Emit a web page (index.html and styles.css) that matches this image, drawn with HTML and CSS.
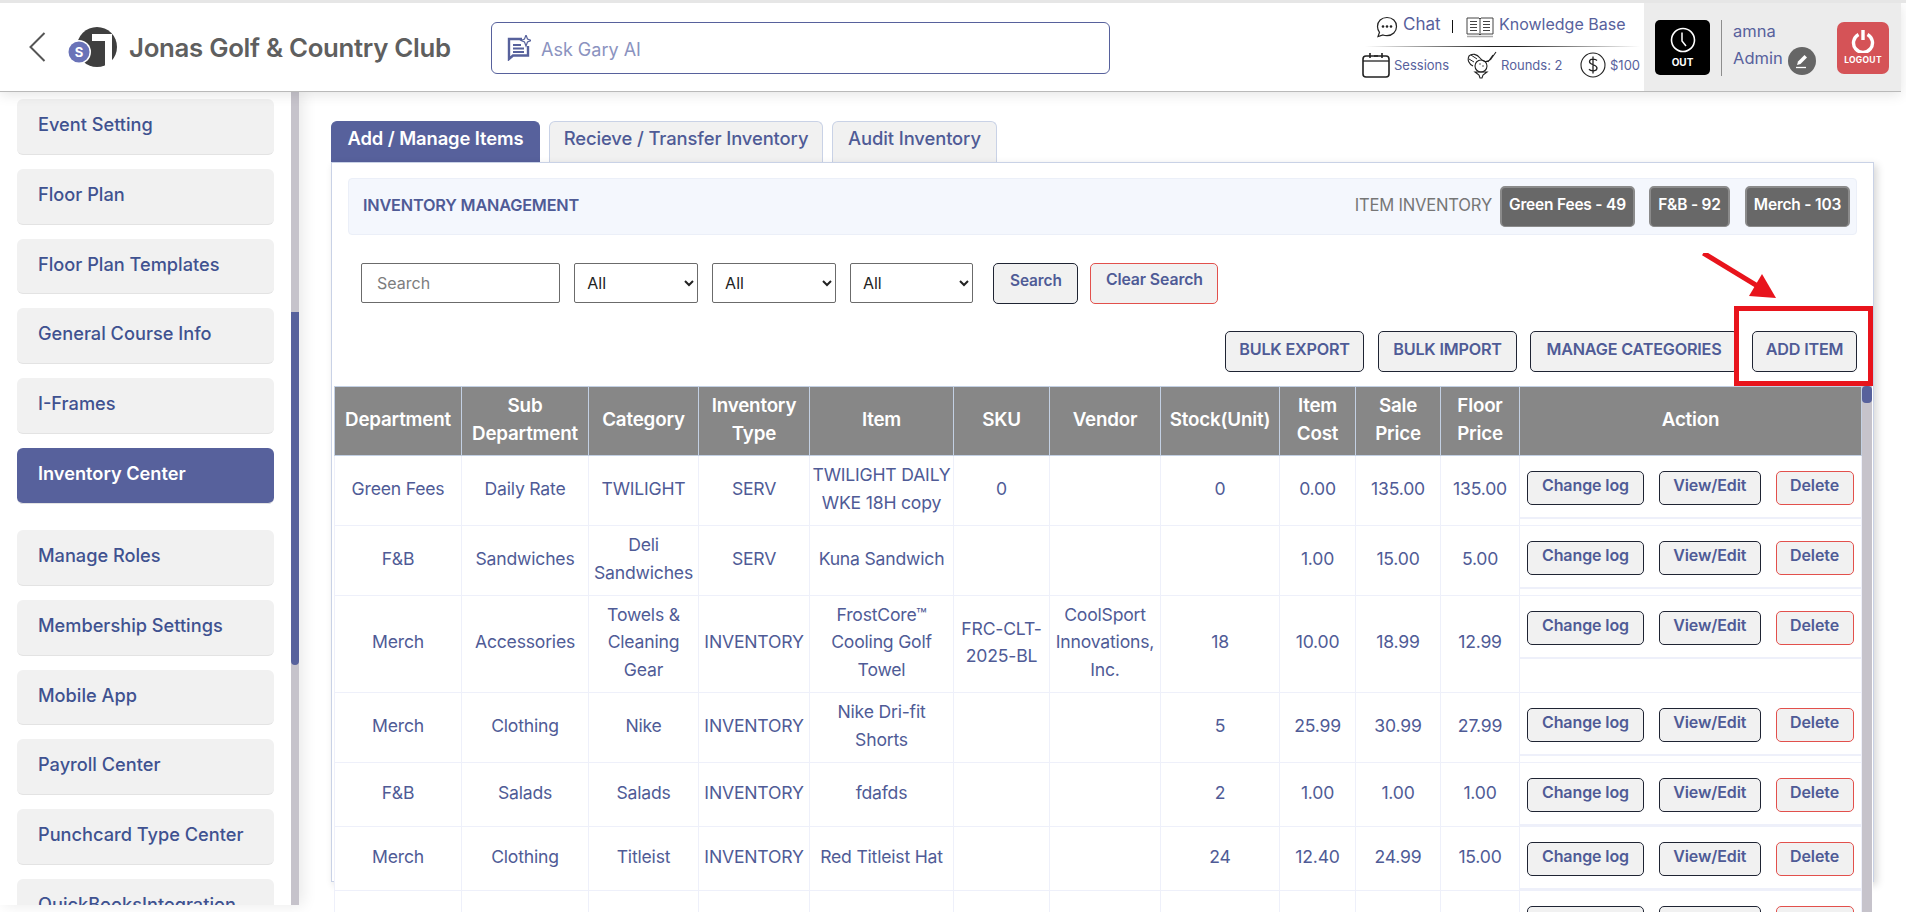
FILE: index.html
```html
<!DOCTYPE html>
<html lang="en">
<head>
<meta charset="utf-8">
<title>Inventory Center</title>
<link rel="stylesheet" href="styles.css">
</head>
<body>
<div class="page">
  <header class="topbar">
    <div class="brand">
      <svg class="back" viewBox="0 0 17 30" width="17" height="30"><path d="M15.5 1 L1.5 15 L15.5 29" fill="none" stroke="#555" stroke-width="2"/></svg>
      <svg class="logo" viewBox="0 0 52 42" width="52" height="42">
        <circle cx="31" cy="21" r="20" fill="#3f3f3f"/>
        <path d="M26 8 H46 V38 L39 40 V15 H26 Z" fill="#fff"/>
        <circle cx="13" cy="26" r="12" fill="#fff"/>
        <circle cx="13" cy="26" r="10.5" fill="#6a73b8"/>
        <text x="13" y="30.5" class="logo-s" text-anchor="middle">S</text>
      </svg>
      <span class="club">Jonas Golf &amp; Country Club</span>
    </div>
    <div class="ask">
      <svg viewBox="0 0 24 26" width="24" height="26"><path d="M15 4 H2 V24 L6 20.500 H21 V11" fill="none" stroke="#57619c" stroke-width="2.400"/><path d="M6 10 H14 M6 13.500 H17 M6 17 H17" stroke="#57619c" stroke-width="1.800"/><path d="M19 0 L20.500 4 L24 5.500 L20.500 7 L19 11 L17.500 7 L14 5.500 L17.500 4 Z" fill="none" stroke="#57619c" stroke-width="1.200"/></svg>
      <span class="ask-text">Ask Gary AI</span>
    </div>
    <div class="links">
      <div class="links-a">
        <svg viewBox="0 0 22 22" width="22" height="22"><path d="M11 1.500 C5.500 1.500 1.500 5.300 1.500 10.500 C1.500 12.800 2.300 14.800 3.500 16.300 L2 20.500 L7 19 C8.300 19.500 9.600 19.700 11 19.700 C16.500 19.700 20.500 15.700 20.500 10.500 C20.500 5.300 16.500 1.500 11 1.500 Z" fill="none" stroke="#222" stroke-width="1.200"/><circle cx="7" cy="10.500" r="1.300" fill="#222"/><circle cx="11" cy="10.500" r="1.300" fill="#222"/><circle cx="15" cy="10.500" r="1.300" fill="#222"/></svg>
        <span class="link-chat">Chat</span>
        <i class="pipe"></i>
        <svg viewBox="0 0 28 22" width="28" height="22"><path d="M1 2 H13 L14 3 L15 2 H27 V18 H15 L14 19 L13 18 H1 Z" fill="none" stroke="#444" stroke-width="1"/><path d="M14 3 V18 M4 5.500 H11 M4 8.500 H11 M4 11.500 H11 M4 14.500 H11 M17 5.500 H24 M17 8.500 H24 M17 11.500 H24 M17 14.500 H24" stroke="#444" stroke-width="1"/><path d="M1 20.500 H27" stroke="#aaa" stroke-width="1.500"/></svg>
        <span class="link-kb">Knowledge Base</span>
      </div>
      <div class="links-rule"></div>
      <div class="links-b">
        <svg class="ic-cal" viewBox="0 0 28 26" width="28" height="26"><rect x="1" y="4" width="26" height="21" rx="3" fill="none" stroke="#222" stroke-width="1.600"/><path d="M1 9 H27" stroke="#222" stroke-width="1.300"/><path d="M8 1 V6 M20 1 V6 M12 4 H16" stroke="#222" stroke-width="1.600"/></svg>
        <span class="small s-sessions">Sessions</span>
        <svg class="ic-golf" viewBox="0 0 30 28" width="30" height="28"><path d="M29 1 L24 8 C20 12 16 11 13 7 C10 3 5 2 2 5 C0 9 2 13 6 15 M26 4 L21 11" fill="none" stroke="#222" stroke-width="1.100"/><path d="M4 4 L10 8 M2 8 L7 11" stroke="#222" stroke-width="1"/><circle cx="14" cy="15" r="6" fill="none" stroke="#222" stroke-width="1.100"/><path d="M8 21 H20 L16 24 L15 27 H13 L12 24 Z" fill="none" stroke="#222" stroke-width="1.100"/><circle cx="13" cy="13" r=".7" fill="#222"/><circle cx="16" cy="15" r=".7" fill="#222"/></svg>
        <span class="small s-rounds">Rounds: 2</span>
        <svg class="ic-coin" viewBox="0 0 26 26" width="26" height="26"><circle cx="13" cy="13" r="12" fill="none" stroke="#222" stroke-width="1.100"/><path d="M17 8.500 C15 6.500 9.500 6.500 9.500 9.800 C9.500 13.200 17 12.300 17 16 C17 19.500 11 19.500 9 17.300 M13 4.500 V21.500" fill="none" stroke="#222" stroke-width="1.300"/></svg>
        <span class="small">$100</span>
      </div>
    </div>
    <div class="userbox">
      <div class="clock">
        <svg viewBox="0 0 26 26" width="26" height="26"><circle cx="13" cy="13" r="11.500" fill="none" stroke="#fff" stroke-width="1.600"/><path d="M12 5.500 V14 L16 19" fill="none" stroke="#fff" stroke-width="1.500"/></svg>
        <span>OUT</span>
      </div>
      <i class="userbox-rule"></i>
      <div class="who">
        <span class="who-name">amna</span>
        <span class="who-role">Admin</span>
        <span class="edit"><svg viewBox="0 0 16 16" width="16" height="16"><path d="M3 12 L4 8.500 L10.500 2 L13 4.500 L6.500 11 Z" fill="#fff"/><path d="M2 14.500 H12" stroke="#fff" stroke-width="1.300"/></svg></span>
      </div>
      <div class="logout">
        <svg viewBox="0 0 24 24" width="24" height="24"><path d="M7.500 5.500 A9.500 9.500 0 1 0 16.500 5.500" fill="none" stroke="#fff" stroke-width="3.400"/><path d="M12 1 V11" stroke="#fff" stroke-width="3.400"/></svg>
        <span>LOGOUT</span>
      </div>
    </div>
  </header>

  <div class="body-row">
    <aside class="side">
      <nav class="side-list">
        <a class="side-item">Event Setting</a>
        <a class="side-item">Floor Plan</a>
        <a class="side-item">Floor Plan Templates</a>
        <a class="side-item">General Course Info</a>
        <a class="side-item">I-Frames</a>
        <a class="side-item active">Inventory Center</a>
        <a class="side-item">Manage Roles</a>
        <a class="side-item">Membership Settings</a>
        <a class="side-item">Mobile App</a>
        <a class="side-item">Payroll Center</a>
        <a class="side-item">Punchcard Type Center</a>
        <a class="side-item">QuickBooksIntegration</a>
      </nav>
      <div class="side-track"><div class="side-thumb"></div></div>
    </aside>

    <main class="main">
      <div class="tabs">
        <a class="tab tab-1 on">Add / Manage Items</a>
        <a class="tab tab-2">Recieve / Transfer Inventory</a>
        <a class="tab tab-3">Audit Inventory</a>
      </div>
      <section class="panel">
        <div class="band">
          <span class="band-title">INVENTORY MANAGEMENT</span>
          <span class="band-label">ITEM INVENTORY</span>
          <span class="chip chip-1">Green Fees - 49</span>
          <span class="chip chip-2">F&amp;B - 92</span>
          <span class="chip chip-3">Merch - 103</span>
        </div>
        <div class="filters">
          <input class="search" type="text" placeholder="Search">
          <select class="sel"><option>All</option></select>
          <select class="sel"><option>All</option></select>
          <select class="sel"><option>All</option></select>
          <a class="btn f-search">Search</a>
          <a class="btn red f-clear">Clear Search</a>
        </div>
        <div class="actionsbar">
          <a class="btn bar b-export">BULK EXPORT</a>
          <a class="btn bar b-import">BULK IMPORT</a>
          <a class="btn bar b-cat">MANAGE CATEGORIES</a>
          <a class="btn bar b-add">ADD ITEM</a>
        </div>

        <div class="table-wrap">
          <table class="grid">
            <colgroup>
              <col class="c1"><col class="c2"><col class="c3"><col class="c4"><col class="c5"><col class="c6"><col class="c7"><col class="c8"><col class="c9"><col class="c10"><col class="c11"><col class="c12">
            </colgroup>
            <thead>
              <tr><th>Department</th><th>Sub Department</th><th>Category</th><th>Inventory Type</th><th>Item</th><th>SKU</th><th>Vendor</th><th>Stock(Unit)</th><th>Item Cost</th><th>Sale Price</th><th>Floor Price</th><th>Action</th></tr>
            </thead>
            <tbody>
              <tr class="r70"><td>Green Fees</td><td>Daily Rate</td><td>TWILIGHT</td><td>SERV</td><td>TWILIGHT DAILY WKE 18H copy</td><td>0</td><td></td><td>0</td><td>0.00</td><td>135.00</td><td>135.00</td><td class="act"><div class="rowbtns"><a class="btn cl">Change log</a><a class="btn ve">View/Edit</a><a class="btn red de">Delete</a></div></td></tr>
              <tr class="r70"><td>F&amp;B</td><td>Sandwiches</td><td>Deli Sandwiches</td><td>SERV</td><td>Kuna Sandwich</td><td></td><td></td><td></td><td>1.00</td><td>15.00</td><td>5.00</td><td class="act"><div class="rowbtns"><a class="btn cl">Change log</a><a class="btn ve">View/Edit</a><a class="btn red de">Delete</a></div></td></tr>
              <tr class="r97"><td>Merch</td><td>Accessories</td><td>Towels &amp; Cleaning Gear</td><td>INVENTORY</td><td>FrostCore™ Cooling Golf Towel</td><td>FRC-CLT-2025-BL</td><td>CoolSport Innovations, Inc.</td><td>18</td><td>10.00</td><td>18.99</td><td>12.99</td><td class="act"><div class="rowbtns"><a class="btn cl">Change log</a><a class="btn ve">View/Edit</a><a class="btn red de">Delete</a></div></td></tr>
              <tr class="r70"><td>Merch</td><td>Clothing</td><td>Nike</td><td>INVENTORY</td><td>Nike Dri-fit Shorts</td><td></td><td></td><td>5</td><td>25.99</td><td>30.99</td><td>27.99</td><td class="act"><div class="rowbtns"><a class="btn cl">Change log</a><a class="btn ve">View/Edit</a><a class="btn red de">Delete</a></div></td></tr>
              <tr class="r64"><td>F&amp;B</td><td>Salads</td><td>Salads</td><td>INVENTORY</td><td>fdafds</td><td></td><td></td><td>2</td><td>1.00</td><td>1.00</td><td>1.00</td><td class="act"><div class="rowbtns"><a class="btn cl">Change log</a><a class="btn ve">View/Edit</a><a class="btn red de">Delete</a></div></td></tr>
              <tr class="r64"><td>Merch</td><td>Clothing</td><td>Titleist</td><td>INVENTORY</td><td>Red Titleist Hat</td><td></td><td></td><td>24</td><td>12.40</td><td>24.99</td><td>15.00</td><td class="act"><div class="rowbtns"><a class="btn cl">Change log</a><a class="btn ve">View/Edit</a><a class="btn red de">Delete</a></div></td></tr>
              <tr class="r64"><td></td><td></td><td></td><td></td><td></td><td></td><td></td><td></td><td></td><td></td><td></td><td class="act"><div class="rowbtns"><a class="btn cl">Change log</a><a class="btn ve">View/Edit</a><a class="btn red de">Delete</a></div></td></tr>
            </tbody>
          </table>
          <div class="grid-track"><div class="grid-thumb"></div></div>
        </div>
        <div class="marker-box"></div>
        <svg class="marker-arrow" viewBox="0 0 76 46" width="76" height="46"><path d="M1.500 1.500 L60 33" stroke="#e8141c" stroke-width="5" transform="rotate(3 30 17)"/><path d="M61 21 L48 43 L75 45 Z" fill="#e8141c"/></svg>
      </section>
    </main>
  </div>
</div>
</body>
</html>
```

FILE: styles.css
```css
* { box-sizing: border-box; }
html, body { margin: 0; padding: 0; height: 100%; background: #fff; overflow: hidden; }
body { font-family: "Inter", "Liberation Sans", sans-serif; color: #4f5b96; }
.page { width: 1906px; height: 912px; overflow: hidden; border-top: 3px solid #e6e6e6; position: relative; }

/* top bar */
.topbar { width: 1901px; height: 89px; display: flex; background: #fff; border-bottom: 1px solid #b9b9b9; box-shadow: 0 3px 12px rgba(0,0,0,.10); position: relative; z-index: 3; }
.brand { width: 491px; flex: none; display: flex; align-items: center; }
.back { margin-left: 29px; flex: none; }
.logo { margin-left: 20px; flex: none; }
.logo-s { font: 700 13px "Inter", sans-serif; fill: #fff; }
.club { margin-left: 11px; margin-top: 1px; font-size: 25.800px; font-weight: 600; color: #5f5f5f; letter-spacing: -.3px; white-space: nowrap; }
.ask { width: 619px; height: 52px; margin-top: 19px; flex: none; display: flex; align-items: center; gap: 10px; padding-left: 15px; border: 1px solid #57619c; border-radius: 6px; font-size: 18px; color: #8b93c0; }
.ask-text { margin-top: 2px; }
.links { width: 534px; flex: none; padding-top: 10px; position: relative; }
.links-a { display: flex; align-items: center; height: 27px; padding-left: 266px; font-size: 17px; color: #57619c; }
.link-chat { margin-left: 5px; width: 38px; margin-top: -6px; }
.pipe { width: 1px; height: 13px; background: #111; margin: 0 13px 0 11px; }
.link-kb { margin-left: 5px; white-space: nowrap; margin-top: -6px; font-size: 16px; }
.links-rule { height: 1px; margin: 6px 4px 0 255px; background: linear-gradient(90deg, #fff, #222 45%, #222 55%, #fff); }
.links-b { display: flex; align-items: center; height: 34px; padding-left: 252px; margin-top: 1px; }
.small { font-size: 13px; color: #57619c; white-space: nowrap; margin-left: 4px; }
.s-sessions { width: 73px; }
.s-rounds { width: 79px; }
.ic-coin { flex: none; }
.userbox { width: 257px; flex: none; background: #ececec; display: flex; position: relative; padding: 17px 0 0 11px; }
.clock { width: 55px; height: 55px; background: #000; border-radius: 5px; color: #fff; display: flex; flex-direction: column; align-items: center; padding-top: 7px; font-size: 10px; font-weight: 700; gap: 3px; }
.userbox-rule { width: 1px; height: 56px; background: #8d8d8d; margin-left: 11px; }
.who { width: 115px; padding-left: 11px; position: relative; display: flex; flex-direction: column; color: #57619c; font-size: 16.500px; }
.who-name { margin-top: 1px; height: 27px; }
.edit { position: absolute; left: 66px; top: 27px; width: 28px; height: 28px; border-radius: 50%; background: #666; display: flex; align-items: center; justify-content: center; }
.logout { width: 52px; height: 52px; margin-top: 2px; background: #d55357; border-radius: 7px; color: #fff; display: flex; flex-direction: column; align-items: center; padding-top: 7px; font-size: 8.500px; font-weight: 700; gap: 2px; letter-spacing: .3px; }

/* layout */
.body-row { display: flex; height: 820px; }
.side { width: 299px; height: 813px; flex: none; display: flex; position: relative; box-shadow: 4px 0 14px rgba(0,0,0,.09); z-index: 2; background: #fff; overflow: hidden; }
.side-list { width: 291px; padding: 7px 0 0 17px; flex: none; }
.side-item { display: block; width: 257px; height: 55.800px; margin-bottom: 14px; background: #f1f1f1; border-radius: 6px; border-bottom: 1px solid #e3e3e3; padding: 12px 0 0 21px; font-size: 18.200px; font-weight: 500; color: #3f5290; line-height: 26px; white-space: nowrap; }
.side-item.active { background: #57619c; color: #fff; font-weight: 600; margin-bottom: 26.200px; }
.side-track { width: 8px; background: #c6c3cb; padding-top: 220px; }
.side-thumb { height: 353px; background: #57619c; border-radius: 0 0 5px 5px; }

/* main */
.main { flex: 1; padding: 29px 0 0 32px; min-width: 0; }
.tabs { display: flex; height: 41px; gap: 9px; position: relative; }
.tab { height: 41px; background: #f1f1f1; border: 1px solid #c9d2e6; border-bottom: 0; border-radius: 6px 6px 0 0; font-size: 18.400px; font-weight: 500; line-height: 32px; text-align: center; white-space: nowrap; color: #4f5b96; letter-spacing: -.1px; }
.tab.on { background: #57619c; border-color: #57619c; color: #fff; font-weight: 600; }
.tab-1 { width: 209px; }
.tab-2 { width: 274px; }
.tab-3 { width: 165px; }
.panel { width: 1543px; height: 720px; border: 1px solid #c9d2e6; position: relative; box-shadow: 3px 3px 8px rgba(0,0,0,.16); background: #fff; padding: 15px 0 0 16px; }
.band { width: 1509px; height: 57px; background: #f4f7fd; border: 1px solid #ebeff8; border-radius: 4px; display: flex; align-items: center; padding: 0 6px 0 14px; }
.band-title { font-size: 16.300px; font-weight: 600; color: #4f5b96; flex: 1; margin-top: -4px; letter-spacing: -.2px; }
.band-label { font-size: 16.600px; color: #767676; margin-right: 8px; margin-top: -4px; letter-spacing: -.2px; }
.chip { height: 41px; background: #686868; border: 2px solid #8b8b8b; border-bottom-width: 1px; border-radius: 5px; color: #fff; font-size: 15.500px; font-weight: 600; display: flex; align-items: center; justify-content: center; letter-spacing: -.2px; padding-bottom: 5px; }
.chip-1 { width: 135px; }
.chip-2 { width: 81px; margin-left: 14px; }
.chip-3 { width: 105px; margin-left: 15px; }
.filters { display: flex; margin-top: 28px; height: 40px; padding-left: 13px; }
.search { width: 199px; height: 40px; border: 1px solid #6b6b6b; border-radius: 2px; padding: 0 15px; font: 16px "Inter", sans-serif; color: #333; background: #fff; }
.search::placeholder { color: #7d7d7d; }
.sel { width: 123.500px; height: 40px; margin-left: 14.300px; border: 1px solid #6b6b6b; border-radius: 2px; padding: 0 8px; font: 16px "Inter", sans-serif; color: #222; background: #fff; }
.btn { display: flex; align-items: center; justify-content: center; height: 34px; background: #f1f1f1; border: 1px solid #1f2433; border-radius: 5px; color: #4f5b96; font-weight: 600; font-size: 16px; padding-bottom: 5px; white-space: nowrap; letter-spacing: -.1px; }
.btn.red { border-color: #e2504c; }
.f-search { width: 85px; height: 41px; margin-left: 20px; padding-bottom: 6px; font-size: 15.400px; }
.f-clear { width: 128px; height: 41px; margin-left: 12px; padding-bottom: 8px; font-size: 15.800px; }
.actionsbar { display: flex; margin-top: 28px; height: 41px; padding-left: 877px; }
.bar { height: 41px; padding-bottom: 5px; letter-spacing: -.2px; font-size: 16.200px; }
.b-export { width: 139px; }
.b-import { width: 139px; margin-left: 14px; }
.b-cat { width: 208px; margin-left: 13px; }
.b-add { width: 105px; margin-left: 14px; }
.marker-box { position: absolute; left: 1402px; top: 143px; width: 139px; height: 80px; border: 5px solid #e8141c; }
.marker-arrow { position: absolute; left: 1369px; top: 90px; }

/* table */
.table-wrap { position: absolute; left: 2px; top: 223px; width: 1539px; background: #fff; }
.grid { width: 1527px; border-collapse: collapse; table-layout: fixed; }
.c1, .c2 { width: 127px; }
.c3 { width: 110px; }
.c4 { width: 111px; }
.c5 { width: 144px; }
.c6 { width: 96px; }
.c7 { width: 111px; }
.c8 { width: 119px; }
.c9 { width: 76px; }
.c10 { width: 85px; }
.c11 { width: 79px; }
.c12 { width: 342px; }
.grid thead tr { height: 69px; }
.grid th { background: #878787; color: #fff; border: 1px solid #c3d0e3; font-size: 18.800px; font-weight: 600; line-height: 27.500px; padding: 0 2px 3px; letter-spacing: -.2px; }
.grid td { border: 1px solid #eef0fa; text-align: center; font-size: 17.600px; line-height: 27.500px; padding: 0 2px 4px; color: #4f5b96; letter-spacing: -.2px; }
.r70 { height: 70px; }
.r97 { height: 97px; }
.r64 { height: 64px; }
.grid td.act { padding: 0; vertical-align: top; }
.rowbtns { display: flex; height: 63px; padding: 15px 0 0 7px; border-bottom: 2px solid #eef0fa; }
.cl { width: 117px; }
.ve { width: 102.500px; margin-left: 14.500px; }
.de { width: 78px; margin-left: 14.500px; }
.grid-track { position: absolute; left: 1528px; top: 0; width: 10px; height: 540px; background: #c6c3cb; }
.grid-thumb { height: 17px; background: #57619c; border-radius: 4px; }
```
